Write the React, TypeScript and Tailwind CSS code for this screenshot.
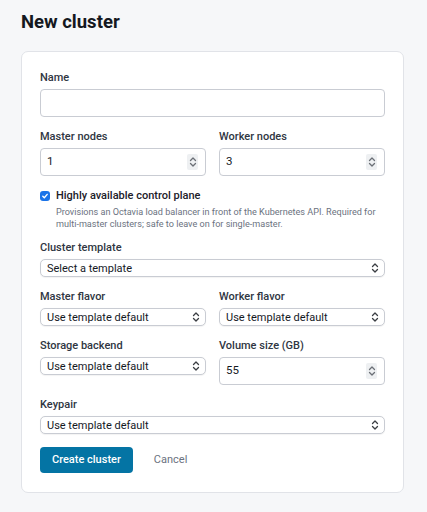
import type { ReactNode } from "react";

function Chevrons() {
  return (
    <svg width="8" height="10" viewBox="0 0 8 10" fill="none" stroke="currentColor" strokeWidth="1.3" strokeLinecap="round" strokeLinejoin="round">
      <path d="M1.5 3.5 4 1l2.5 2.5" />
      <path d="M1.5 6.5 4 9l2.5-2.5" />
    </svg>
  );
}

function Field({ label, children }: { label: string; children: ReactNode }) {
  return (
    <div className="flex min-w-0 flex-1 flex-col">
      <label className="mb-1 text-[11px] font-medium leading-[15px] text-[#2f3642]">{label}</label>
      {children}
    </div>
  );
}

function NumberBox({ value }: { value?: string }) {
  return (
    <div className="flex h-[28px] items-center justify-between rounded-[4px] border border-[#c9ccd3] bg-white pl-[6px] pr-[7px] text-[11.5px] text-[#15191f]">
      <span>{value}</span>
      {value !== undefined ? (
        <span className="flex h-[16px] w-[11px] items-center justify-center rounded-[2px] bg-[#eef0f2] text-[#6b6f76]">
          <Chevrons />
        </span>
      ) : null}
    </div>
  );
}

function SelectBox({ value }: { value: string }) {
  return (
    <div className="flex h-[18px] items-center justify-between rounded-[5px] border border-[#c9ccd3] bg-white pl-[6px] pr-[5px] text-[11px] leading-none text-[#15191f] shadow-[0_0.5px_1px_rgba(0,0,0,0.05)]">
      <span>{value}</span>
      <span className="text-[#3a3d42]">
        <Chevrons />
      </span>
    </div>
  );
}

export default function App() {
  return (
    <div className="min-h-[512px] bg-[#f6f7f9] pl-[21px] pr-[23px] pt-2 font-['Roboto',sans-serif]">
      <h1 className="mb-[15px] text-[18.5px] font-bold leading-7 text-[#141820]">New cluster</h1>

      <div className="rounded-[7px] border border-[#e1e3e8] bg-white px-[18px] pb-[19px] pt-[18px]">
        <div className="flex flex-col gap-3">
          <Field label="Name">
            <NumberBox />
          </Field>

          <div className="flex gap-[13px]">
            <Field label="Master nodes">
              <NumberBox value="1" />
            </Field>
            <Field label="Worker nodes">
              <NumberBox value="3" />
            </Field>
          </div>

          <div className="-mb-[2px] flex gap-[6px]">
            <span className="mt-[3px] flex h-[10px] w-[10px] shrink-0 items-center justify-center rounded-[3px] bg-[#1a73e8]">
              <svg width="8" height="8" viewBox="0 0 8 8" fill="none" stroke="white" strokeWidth="1.4" strokeLinecap="round" strokeLinejoin="round">
                <path d="M1.8 4.2 3.3 5.7 6.2 2.4" />
              </svg>
            </span>
            <div>
              <p className="text-[11px] font-medium leading-[16px] text-[#1c2029]">Highly available control plane</p>
              <p className="mt-[2px] text-[9.1px] leading-[12px] text-[#6b7280]">
                <span className="block whitespace-nowrap">Provisions an Octavia load balancer in front of the Kubernetes API. Required for</span>
                <span className="block whitespace-nowrap">multi-master clusters; safe to leave on for single-master.</span>
              </p>
            </div>
          </div>

          <Field label="Cluster template">
            <SelectBox value="Select a template" />
          </Field>

          <div className="flex gap-[13px]">
            <Field label="Master flavor">
              <SelectBox value="Use template default" />
            </Field>
            <Field label="Worker flavor">
              <SelectBox value="Use template default" />
            </Field>
          </div>

          <div className="flex gap-[13px]">
            <Field label="Storage backend">
              <SelectBox value="Use template default" />
            </Field>
            <Field label="Volume size (GB)">
              <NumberBox value="55" />
            </Field>
          </div>

          <Field label="Keypair">
            <SelectBox value="Use template default" />
          </Field>

          <div className="mt-px flex items-center gap-[21px]">
            <button type="button" className="h-[26px] rounded-[4px] bg-[#0474a4] px-[12px] text-[11px] font-medium text-white">
              Create cluster
            </button>
            <button type="button" className="text-[11px] text-[#6b7280]">
              Cancel
            </button>
          </div>
        </div>
      </div>
    </div>
  );
}
